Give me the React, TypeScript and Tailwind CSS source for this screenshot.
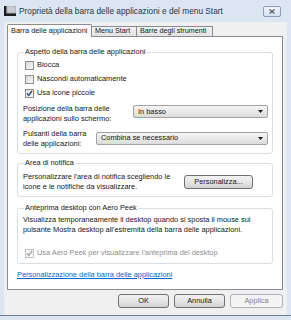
import { ReactNode } from 'react';

function CheckBox({ checked, disabled }: { checked?: boolean; disabled?: boolean }) {
  return (
    <span
      className={`w-[9px] h-[9px] shrink-0 border flex items-center justify-center bg-gradient-to-br ${
        disabled ? 'border-[#c4c4c4] from-[#f0f0f0] to-[#fafafa]' : 'border-[#8e8f8f] from-[#d8d8d8] to-[#fbfbfb]'
      }`}
    >
      {checked && (
        <svg width="7" height="7" viewBox="0 0 7 7">
          <path
            d="M1 3.5 L2.8 5.5 L6 1"
            fill="none"
            stroke={disabled ? '#a8a8a8' : '#2a4c8e'}
            strokeWidth="1.4"
          />
        </svg>
      )}
    </span>
  );
}

function CheckRow({ label, checked, disabled }: { label: string; checked?: boolean; disabled?: boolean }) {
  return (
    <div className="h-[14px] flex items-center gap-[3px] pl-[7px]">
      <CheckBox checked={checked} disabled={disabled} />
      <span className={disabled ? 'text-[#8d8d8d]' : ''}>{label}</span>
    </div>
  );
}

function Dropdown({ value, className }: { value: string; className: string }) {
  return (
    <div
      className={`h-[13px] border border-[#a3a3a3] rounded-[2px] bg-gradient-to-b from-[#f5f5f5] to-[#dcdcdc] flex items-center pl-[4px] pr-[4px] ${className}`}
    >
      <span className="flex-1">{value}</span>
      <svg width="5" height="3" viewBox="0 0 5 3">
        <path d="M0 0 H5 L2.5 3 Z" fill="#1a1a1a" />
      </svg>
    </div>
  );
}

function GroupBox({ title, children, className }: { title: string; children: ReactNode; className?: string }) {
  return (
    <fieldset className={`border border-[#d5dfe5] rounded-[3px] pl-[5px] pr-[4px] ${className ?? ''}`}>
      <legend className="ml-[1px] px-[1px] leading-[10px]">{title}</legend>
      {children}
    </fieldset>
  );
}

function Button({ label, disabled, className }: { label: string; disabled?: boolean; className: string }) {
  return (
    <div
      className={`h-[14px] border rounded-[3px] flex items-center justify-center ${
        disabled
          ? 'border-[#adb2b5] bg-[#f4f4f4] text-[#838383]'
          : 'border-[#707070] bg-gradient-to-b from-[#f2f2f2] via-[#e6e6e6] to-[#d2d2d2]'
      } ${className}`}
    >
      {label}
    </div>
  );
}

export default function App() {
  return (
    <div
      className="w-[291px] h-[320px] bg-[#dbe6f2] flex flex-col text-[7.4px] text-[#161616] overflow-hidden"
      style={{ fontFamily: '"Liberation Sans", Arial, sans-serif' }}
    >
      {/* title bar */}
      <div className="h-[22px] flex items-center pl-[4px] pr-[10px] shrink-0">
        <svg width="12" height="10" viewBox="0 0 12 10" className="mr-[3px]">
          <rect x="3" y="0" width="9" height="7" fill="#c8ccd2" stroke="#8a9099" strokeWidth="0.6" />
          <rect x="0" y="0" width="2.4" height="10" fill="#1c1c1c" />
          <rect x="0" y="7.4" width="12" height="2.6" fill="#1c1c1c" />
        </svg>
        <span className="text-[8.3px] text-[#2c3440]">Proprietà della barra delle applicazioni e del menu Start</span>
        <div className="ml-auto w-[18px] h-[11px] border border-[#8c9db4] rounded-[2px] bg-gradient-to-b from-[#f1f5fa] to-[#d6e1ee] flex items-center justify-center">
          <svg width="6" height="5" viewBox="0 0 6 5">
            <path d="M0.5 0.5 L5.5 4.5 M5.5 0.5 L0.5 4.5" stroke="#4a5566" strokeWidth="1.1" />
          </svg>
        </div>
      </div>

      {/* client area */}
      <div className="flex-1 mx-[4px] bg-[#f0f0f0] border-x border-[#e8eef6] pl-[2px] pr-[3px] pt-[2px] flex flex-col">
        {/* tabs */}
        <div className="h-[12px] flex items-end relative z-10">
          <div className="h-[13px] -mb-[1px] w-[85px] bg-white border border-b-0 border-[#898c95] rounded-t-[2px] flex items-center pl-[3px]">
            Barra delle applicazioni
          </div>
          <div className="h-[10px] w-[45px] border border-b-0 border-l-0 border-[#898c95] bg-gradient-to-b from-[#f3f3f3] to-[#e3e3e3] flex items-center pl-[3px] text-[7.2px]">
            Menu Start
          </div>
          <div className="h-[10px] w-[76px] border border-b-0 border-l-0 border-[#898c95] bg-gradient-to-b from-[#f3f3f3] to-[#e3e3e3] flex items-center pl-[3px] text-[7.2px]">
            Barre degli strumenti
          </div>
        </div>

        {/* panel */}
        <div className="h-[254px] bg-white border border-[#898c95] px-[9px] pt-[10px] flex flex-col">
          <GroupBox title="Aspetto della barra delle applicazioni" className="pb-[4px]">
            <div className="pt-[1px] -ml-[5px]">
              <CheckRow label="Blocca" />
              <CheckRow label="Nascondi automaticamente" />
              <CheckRow label="Usa icone piccole" checked />
            </div>
            <div className="mt-[4px] flex items-start leading-[10px]">
              <div className="w-[110px]">
                Posizione della barra delle
                <br />
                applicazioni sullo schermo:
              </div>
              <Dropdown value="In basso" className="flex-1 mt-[1px]" />
            </div>
            <div className="mt-[5px] flex items-center leading-[10px]">
              <div className="w-[73px]">
                Pulsanti della barra
                <br />
                delle applicazioni:
              </div>
              <Dropdown value="Combina se necessario" className="flex-1 -mt-[2px]" />
            </div>
          </GroupBox>

          <GroupBox title="Area di notifica" className="mt-[4px] pb-[4px]">
            <div className="pt-[4px] flex items-start leading-[10px]">
              <div className="w-[160px]">
                Personalizzare l'area di notifica scegliendo le
                <br />
                icone e le notifiche da visualizzare.
              </div>
              <Button label="Personalizza..." className="w-[69px] h-[12px] mt-[3px] ml-[1px]" />
            </div>
          </GroupBox>

          <GroupBox title="Anteprima desktop con Aero Peek" className="mt-[6px] pb-[3px]">
            <div className="pt-[2px] leading-[10px]">
              Visualizza temporaneamente il desktop quando si sposta il mouse sul
              <br />
              pulsante Mostra desktop all'estremità della barra delle applicazioni.
            </div>
            <div className="mt-[11px] -ml-[5px]">
              <CheckRow label="Usa Aero Peek per visualizzare l'anteprima del desktop" checked disabled />
            </div>
          </GroupBox>

          <div className="mt-[6px] text-[#0066cc] underline leading-[10px]">
            Personalizzazione della barra delle applicazioni
          </div>
        </div>

        {/* buttons */}
        <div className="mt-[4px] flex justify-end gap-[5px]">
          <Button label="OK" className="w-[51px]" />
          <Button label="Annulla" className="w-[51px]" />
          <Button label="Applica" disabled className="w-[53px]" />
        </div>
      </div>

      {/* bottom frame */}
      <div className="h-[5px] shrink-0 border-t border-[#6f7f92]" />
    </div>
  );
}
